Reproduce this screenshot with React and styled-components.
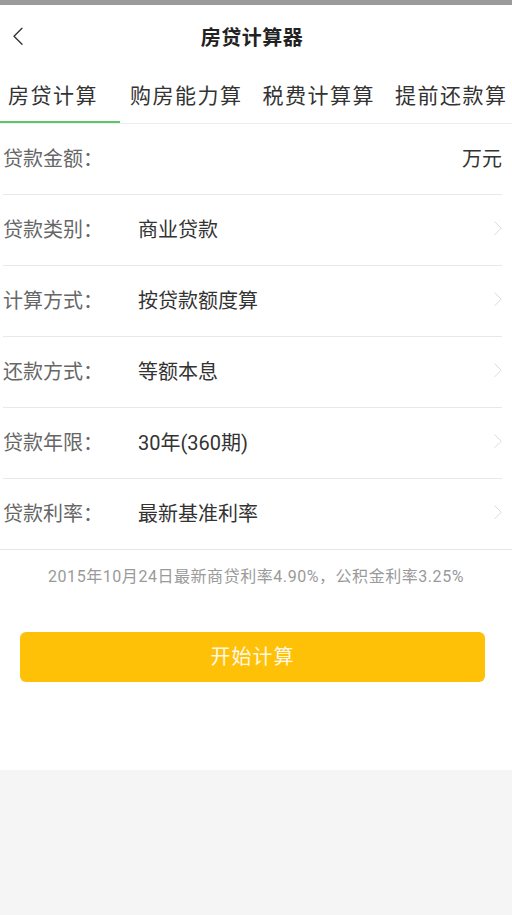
import React, { useState } from "react";
import styled, { createGlobalStyle } from "styled-components";

const GlobalStyle = createGlobalStyle`
    body {
        margin: 0;
        background: #f5f5f5;
        font-family: Roboto, "Noto Sans CJK SC", "Noto Sans", "Liberation Sans", sans-serif;
    }
`;

const Page = styled.div`
    width: 512px;
    min-height: 915px;
    background: #f5f5f5;
`;

const Sheet = styled.div`
    background: #fff;
    padding-bottom: 88px;
`;

const StatusStrip = styled.div`
    height: 5px;
    background: #9b9b9b;
`;

const Header = styled.div`
    position: relative;
    height: 65px;
    display: flex;
    align-items: center;
    justify-content: center;
`;

const BackButton = styled.button`
    position: absolute;
    left: 6px;
    top: 50%;
    transform: translateY(-56%);
    width: 24px;
    height: 30px;
    display: flex;
    align-items: center;
    justify-content: center;
    padding: 0;
    border: none;
    background: none;
    cursor: pointer;
`;

const Title = styled.h1`
    margin: 0 8px 3px 0;
    font-size: 20px;
    font-weight: 700;
    color: #222;
    letter-spacing: 0.5px;
`;

const TabBar = styled.div`
    display: flex;
    height: 53px;
    border-bottom: 1px solid #eeeeee;
`;

const Tab = styled.div`
    position: relative;
    display: flex;
    align-items: center;
    padding: ${(p) => (p.$first ? "0 22px 6px 8px" : "0 10px 6px")};
    font-size: 21px;
    letter-spacing: 1.5px;
    color: #333;
    white-space: nowrap;
    cursor: pointer;

    &::after {
        content: "";
        position: absolute;
        left: 0;
        right: 0;
        bottom: 0;
        height: 2px;
        background: ${(p) => (p.$active ? "#5dc66a" : "transparent")};
    }
`;

const FieldList = styled.div`
    border-bottom: 1px solid #e6e6e6;
`;

const Row = styled.div`
    display: flex;
    align-items: center;
    height: 67px;
    padding-bottom: 3px;
    margin: 0 10px 0 3px;
    border-bottom: ${(p) => (p.$last ? "none" : "1px solid #e8e8e8")};
    cursor: ${(p) => (p.$arrow ? "pointer" : "default")};
`;

const Label = styled.span`
    width: 135px;
    flex-shrink: 0;
    font-size: 20px;
    color: #666;
`;

const Value = styled.span`
    flex: 1;
    font-size: 20px;
    color: #333;
`;

const Unit = styled.span`
    font-size: 20px;
    color: #333;
`;

const Note = styled.p`
    margin: 0;
    height: 50px;
    padding-bottom: 2px;
    display: flex;
    align-items: center;
    justify-content: center;
    font-size: 16px;
    letter-spacing: 0.55px;
    color: #9a9a9a;
    white-space: nowrap;
`;

const StartButton = styled.button`
    display: flex;
    align-items: center;
    justify-content: center;
    width: 465px;
    height: 50px;
    margin: 30px 0 0 20px;
    padding: 0 0 3px;
    border: none;
    border-radius: 6px;
    background: #ffc107;
    color: #fff8e6;
    font-family: inherit;
    font-size: 20px;
    letter-spacing: 1px;
    cursor: pointer;
`;

function Chevron({ left, color, size, stroke }) {
    return (
        <svg width={size} height={size * 1.8} viewBox="0 0 10 18" fill="none">
            <path
                d={left ? "M9 1 L1 9 L9 17" : "M1 1 L9 9 L1 17"}
                stroke={color}
                strokeWidth={stroke}
                strokeLinecap="round"
                strokeLinejoin="round"
            />
        </svg>
    );
}

const tabs = ["房贷计算", "购房能力算", "税费计算算", "提前还款算"];

const fields = [
    { label: "贷款类别：", value: "商业贷款" },
    { label: "计算方式：", value: "按贷款额度算" },
    { label: "还款方式：", value: "等额本息" },
    { label: "贷款年限：", value: "30年(360期)" },
    { label: "贷款利率：", value: "最新基准利率" },
];

export default function App() {
    const [activeTab, setActiveTab] = useState(0);

    return (
        <Page>
            <GlobalStyle />
            <Sheet>
                <StatusStrip />
                <Header>
                    <BackButton aria-label="返回">
                        <Chevron left color="#333" size={10} stroke={1.4} />
                    </BackButton>
                    <Title>房贷计算器</Title>
                </Header>

                <TabBar>
                    {tabs.map((tab, index) => (
                        <Tab
                            key={tab}
                            $first={index === 0}
                            $active={index === activeTab}
                            onClick={() => setActiveTab(index)}
                        >
                            {tab}
                        </Tab>
                    ))}
                </TabBar>

                <FieldList>
                    <Row>
                        <Label>贷款金额：</Label>
                        <Value />
                        <Unit>万元</Unit>
                    </Row>
                    {fields.map((field, index) => (
                        <Row
                            key={field.label}
                            $arrow
                            $last={index === fields.length - 1}
                        >
                            <Label>{field.label}</Label>
                            <Value>{field.value}</Value>
                            <Chevron color="#d9d9d9" size={8} stroke={1.2} />
                        </Row>
                    ))}
                </FieldList>

                <Note>2015年10月24日最新商贷利率4.90%，公积金利率3.25%</Note>

                <StartButton>开始计算</StartButton>
            </Sheet>
        </Page>
    );
}
